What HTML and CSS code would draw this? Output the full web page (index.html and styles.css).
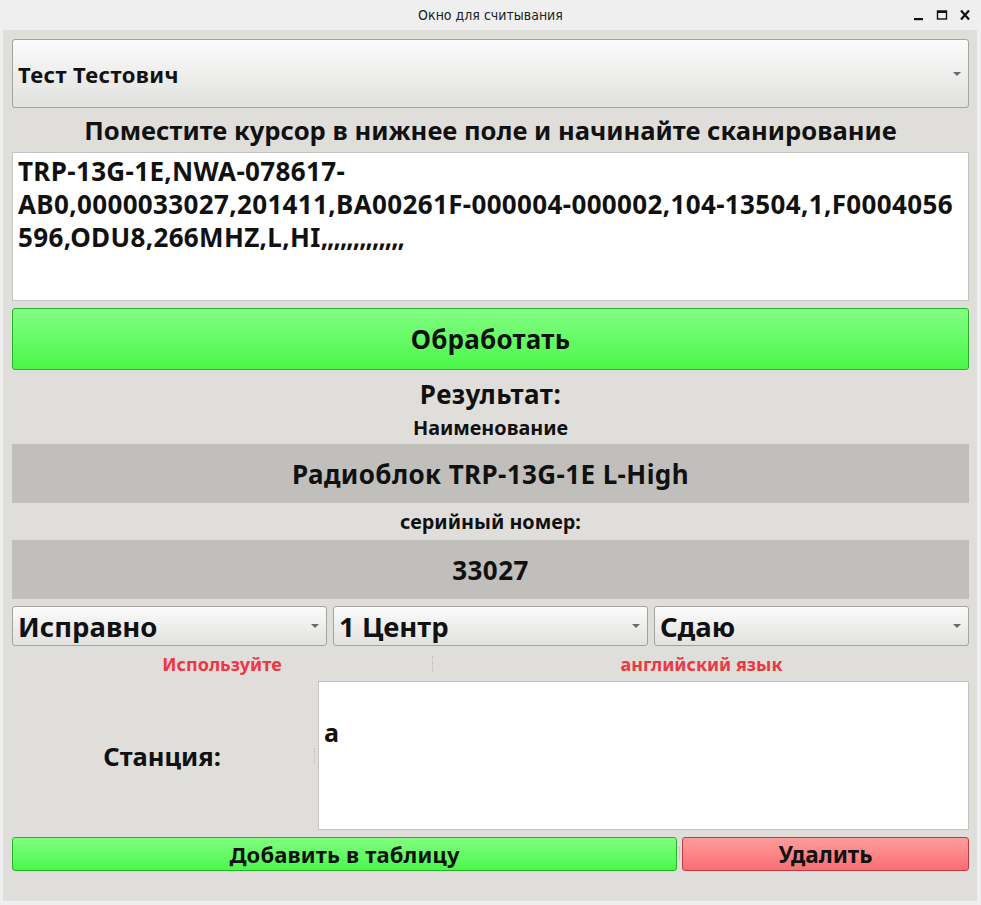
FILE: index.html
```html
<!DOCTYPE html>
<html lang="ru">
<head>
<meta charset="utf-8">
<title>Окно для считывания</title>
<link rel="stylesheet" href="styles.css">
</head>
<body>
<div class="titlebar">
  <span class="title">Окно для считывания</span>
  <div class="controls">
    <svg class="ctl" width="12" height="12" viewBox="0 0 12 12"><rect x="1" y="9" width="9" height="2.2" fill="#111"/></svg>
    <svg class="ctl" width="12" height="12" viewBox="0 0 12 12"><rect x="1.5" y="2" width="9" height="8" fill="none" stroke="#111" stroke-width="1.4"/><rect x="1.5" y="2" width="9" height="2" fill="#111"/></svg>
    <svg class="ctl" width="12" height="12" viewBox="0 0 12 12"><path d="M2 1.5 L10 10.5 M10 1.5 L2 10.5" stroke="#111" stroke-width="2.2"/></svg>
  </div>
</div>
<div class="window">
  <div class="combo combo-big"><span>Тест Тестович</span><i class="arrow"></i></div>
  <div class="row-label heading">Поместите курсор в нижнее поле и начинайте сканирование</div>
  <div class="textbox scan">TRP-13G-1E,NWA-078617-<br>AB0,0000033027,201411,BA00261F-000004-000002,104-13504,1,F0004056<br>596,ODU8,266MHZ,L,HI<span class="commas">,,,,,,,,,,,,,</span></div>
  <div class="btn btn-green btn-process">Обработать</div>
  <div class="row-label result">Результат:</div>
  <div class="row-label small name-label">Наименование</div>
  <div class="valuebox">Радиоблок TRP-13G-1E L-High</div>
  <div class="row-label small serial-label">серийный номер:</div>
  <div class="valuebox">33027</div>
  <div class="combos">
    <div class="combo combo-mid"><span>Исправно</span><i class="arrow"></i></div>
    <div class="combo combo-mid"><span>1 Центр</span><i class="arrow"></i></div>
    <div class="combo combo-mid"><span>Сдаю</span><i class="arrow"></i></div>
  </div>
  <div class="hints">
    <div class="hint">Используйте</div>
    <div class="vsplit"></div>
    <div class="hint">английский язык</div>
  </div>
  <div class="station">
    <div class="station-label">Станция:</div>
    <div class="vsplit tall"></div>
    <div class="textbox station-box">a</div>
  </div>
  <div class="actions">
    <div class="btn btn-green btn-add">Добавить в таблицу</div>
    <div class="vsplit short"></div>
    <div class="btn btn-red btn-del">Удалить</div>
  </div>
</div>
</body>
</html>
```

FILE: styles.css
```css
* { box-sizing: border-box; }
html, body { margin: 0; padding: 0; }
body {
  width: 981px;
  height: 905px;
  background: #efefef;
  font-family: "Noto Sans", "Open Sans", sans-serif;
  font-weight: 700;
  color: #111;
  overflow: hidden;
}
.titlebar {
  height: 30px;
  display: flex;
  align-items: center;
  justify-content: center;
  position: relative;
  background: #efefef;
}
.title {
  font-family: "DejaVu Sans Condensed", "DejaVu Sans", sans-serif;
  font-stretch: condensed;
  font-weight: 400;
  font-size: 14px;
  color: #222;
}
.controls {
  position: absolute;
  right: 10px;
  top: 9px;
  display: flex;
  gap: 11px;
}
.window {
  margin: 0 4px 4px 3px;
  height: 871px;
  background: #dfdeda;
  padding: 9px 8px 0 9px;
  display: flex;
  flex-direction: column;
}
.combo {
  position: relative;
  border: 1px solid #a3a3a0;
  border-radius: 3px;
  background: linear-gradient(#fbfbfb, #e1e1df);
  display: flex;
  align-items: center;
  padding-left: 5px;
}
.combo-big { height: 69px; font-size: 22px; letter-spacing: 0.4px; }
.combo-mid { height: 40px; font-size: 27.5px; flex: 1; }
.arrow {
  position: absolute;
  right: 7px;
  top: 50%;
  margin-top: -2px;
  width: 0; height: 0;
  border-left: 4px solid transparent;
  border-right: 4px solid transparent;
  border-top: 4px solid #6b6b6b;
}
.row-label {
  display: flex;
  align-items: center;
  justify-content: center;
  white-space: nowrap;
}
.heading { height: 44px; font-size: 25.6px; }
.textbox {
  background: #fff;
  border: 1px solid #c4c4c2;
}
.scan {
  height: 149px;
  font-size: 26px;
  letter-spacing: 0.35px;
  line-height: 33px;
  padding: 2px 5px;
  white-space: nowrap;
}
.commas { letter-spacing: -1px; }
.btn {
  display: flex;
  align-items: center;
  justify-content: center;
  border-radius: 3px;
}
.btn-green {
  background: linear-gradient(#82fe82, #4bf74b);
  border: 1px solid #24b424;
}
.btn-red {
  background: linear-gradient(#ff9c9c, #f76f73);
  border: 1px solid #c23a44;
}
.btn-process { height: 62px; margin-top: 7px; font-size: 26px; letter-spacing: 0.2px; }
.result { height: 48px; font-size: 26px; letter-spacing: 0.5px; }
.small { font-size: 19.8px; }
.name-label { height: 18px; margin-bottom: 8px; }
.serial-label { height: 37px; }
.valuebox {
  height: 59px;
  background: #c0bfbb;
  display: flex;
  align-items: center;
  justify-content: center;
  font-size: 26px;
  letter-spacing: 0.4px;
}
.combos {
  margin-top: 7px;
  display: flex;
  gap: 6px;
}
.hints {
  height: 35px;
  display: grid;
  grid-template-columns: 420px 2px 1fr;
  align-items: center;
}
.hint {
  text-align: center;
  font-size: 18px;
  color: #ef3742;
}
.vsplit {
  width: 2px;
  height: 16px;
  border-left: 1px dotted #b9b8b4;
  justify-self: center;
}
.station {
  height: 149px;
  display: grid;
  grid-template-columns: 300px 6px 1fr;
  align-items: center;
}
.station-label {
  text-align: center;
  font-size: 25.5px;
}
.station-box {
  height: 149px;
  font-size: 25px;
  padding: 33px 5px 0 5px;
}
.actions {
  margin-top: 7px;
  height: 34px;
  display: grid;
  grid-template-columns: 665px 5px 1fr;
  align-items: center;
}
.btn-add { height: 34px; font-size: 22px; letter-spacing: 0.15px; }
.btn-del { height: 34px; font-size: 22.5px; }
.vsplit.short { height: 14px; }
```
